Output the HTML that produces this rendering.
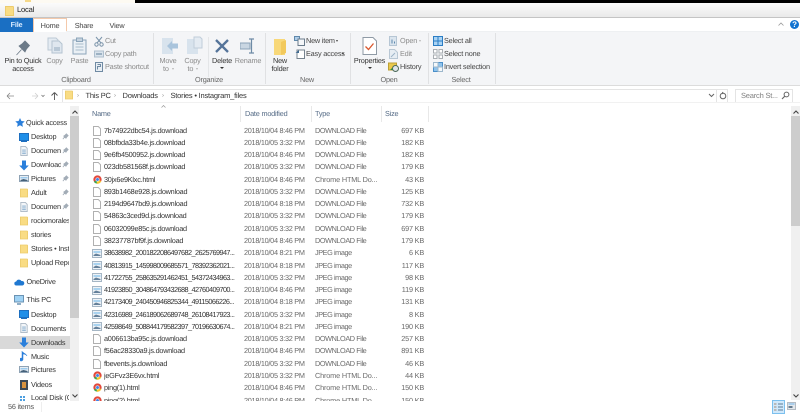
<!DOCTYPE html>
<html><head><meta charset="utf-8"><style>
html,body{margin:0;padding:0;background:#fff}
#p{position:relative;width:800px;height:414px;overflow:hidden;background:#fff;font-family:"Liberation Sans",sans-serif;font-size:7.3px;letter-spacing:-.2px;color:#333;text-rendering:geometricPrecision;filter:blur(.32px)}
#p div,#p svg{position:absolute}
.t{white-space:nowrap;line-height:10px;height:10px}
.c{text-align:center;transform:translateX(-50%)}
.g{color:#8b8b8b}
.l{color:#666}
.sep{width:1px;background:#e0e1e3;top:33px;height:51px}
.row{left:0;width:440px;height:12.27px}
.row div{top:1px}
.n{left:104px;width:134px;overflow:hidden;color:#333;letter-spacing:-.25px}
.n.x{letter-spacing:-.56px}
.d{left:244px;color:#6a6a6a;letter-spacing:-.28px}
.y{left:315px;color:#6a6a6a;letter-spacing:-.42px}
.y.h{letter-spacing:-.16px}
.s{left:390px;width:34px;text-align:right;color:#6a6a6a}
.nv{left:31px;width:38px;overflow:hidden;color:#333}
.pn{width:30px}
.ar{width:0;height:0;border:1.800px solid transparent;border-top:2.200px solid #444;border-bottom:0}
.ar.lg{border-top-color:#b5b5b5}
</style></head><body><div id="p">
<svg width="0" height="0" style="left:0;top:0"><defs>
<symbol id="f" viewBox="0 0 8 10"><path d="M.5.500h4.800l2.200 2.200v6.800H.5z" fill="#fff" stroke="#b0b0b0"/></symbol>
<symbol id="cr" viewBox="0 0 10 10"><circle cx="5" cy="5" r="4.600" fill="#e2483b"/><path d="M5 5L1 7.500A4.600 4.600 0 0 0 5 9.600z" fill="#3aa757"/><path d="M5 5l4.200 1.800A4.600 4.600 0 0 1 4 9.600z" fill="#f7c52b"/><circle cx="5" cy="5" r="2.200" fill="#fff"/><circle cx="5" cy="5" r="1.600" fill="#3f83e6"/></symbol>
<symbol id="j" viewBox="0 0 10 9"><path d="M.5.500h9v8h-9z" fill="#eef2f6" stroke="#a5b6c5"/><path d="M1.500 2h7v2h-7z" fill="#a9d3f0"/><path d="M1.500 6l2.500-1.500 4.500 1.500v1h-7z" fill="#64809a"/></symbol>
<symbol id="fd" viewBox="0 0 10 11"><path d="M.5.500h8.500l.5.500v9.500h-9z" fill="#f9dc84" stroke="#eccb6c"/></symbol>
<symbol id="pin" viewBox="0 0 8 8"><path d="M1 7l2-2.500M2 3.500l2.500 2.500 1-1.500 1.500-1.500-2-2-1.500 1.500z" fill="#a3adb7" stroke="#a3adb7"/></symbol>
<symbol id="dt" viewBox="0 0 10 9"><path d="M.5.500h9v7h-9z" fill="#1f8fe9" stroke="#1d6fc0"/><path d="M2 8.500h6" stroke="#1d6fc0"/></symbol>
<symbol id="doc" viewBox="0 0 8 11"><path d="M.5.500h5l2 2v8h-7z" fill="#f3f6f9" stroke="#aab7c3"/><path d="M2 4.500h4M2 6.500h4M2 8.500h4" stroke="#7ca5c9"/></symbol>
<symbol id="dl" viewBox="0 0 10 11"><path d="M3 .5h4v5h2.800L5 10.500.2 5.500H3z" fill="#2a7fdb"/></symbol>
<symbol id="pc" viewBox="0 0 10 9"><path d="M.5.500h9v6h-9z" fill="#e8eef4" stroke="#8fa3b5"/><path d="M1.500 2h7v1.500h-7z" fill="#9ccbee"/><path d="M1.500 5l3-1 4 1v1h-7z" fill="#45617a"/></symbol>
</defs></svg>

<!-- top strip / title -->
<div style="left:135px;top:0;width:665px;height:3px;background:#000"></div>
<div style="left:0;top:0;width:135px;height:3px;background:#fdfaf2"></div>
<div style="left:25px;top:0;width:6px;height:2px;background:#f6d98a"></div>
<div style="left:0;top:3px;width:800px;height:14px;background:linear-gradient(#fbfbfb,#e9e9e9)"></div>
<div style="left:0;top:17px;width:800px;height:1px;background:#c4c4c4"></div>
<svg style="left:5px;top:6px" width="9" height="10"><use href="#fd" width="9" height="10"/></svg>
<div class="t" style="left:17px;top:5px;font-size:7.600px;color:#222">Local</div>

<!-- tabs -->
<div style="left:0;top:18px;width:33px;height:14px;background:#1a6fc3"></div>
<div class="t c" style="left:16.500px;top:20px;color:#dcecff;font-weight:bold">File</div>
<div style="left:33px;top:18px;width:32px;height:14px;background:#fff;border:1px solid #f4c9ab;border-bottom:0"></div>
<div class="t c" style="left:50px;top:20.500px;color:#444">Home</div>
<div class="t c" style="left:84px;top:20.500px;color:#444">Share</div>
<div class="t c" style="left:117px;top:20.500px;color:#444">View</div>

<!-- ribbon -->
<div style="left:0;top:32px;width:800px;height:53px;background:#f4f5f7"></div>
<div style="left:0;top:85px;width:800px;height:1px;background:#dcdcdc"></div>
<div style="left:66px;top:31px;width:734px;height:1px;background:#eef0f2"></div>
<div class="sep" style="left:153px"></div><div class="sep" style="left:265px"></div><div class="sep" style="left:350px"></div><div class="sep" style="left:428px"></div><div class="sep" style="left:495px"></div>

<!-- clipboard -->
<svg style="left:15px;top:40px" width="16" height="16" viewBox="0 0 16 16"><path d="M1.500 15l5-5.500M4 6l6 6 1.500-3 3-3.500-4.500-4.500-3 3z" fill="#6c7a88" stroke="#6c7a88" stroke-width=".8"/></svg>
<div class="t c" style="left:23px;top:56px;color:#333">Pin to Quick</div>
<div class="t c" style="left:23px;top:64px;color:#333">access</div>
<svg style="left:47px;top:37px" width="16" height="17" viewBox="0 0 16 17"><path d="M1 1h8l2 2v10H1z" fill="#e4ebf2" stroke="#bcc9d5"/><path d="M5 4h7l3 3v9H5z" fill="#dfe7ef" stroke="#b4c3d0"/><path d="M7 10h6v4H7z" fill="#b9c8d6"/></svg>
<div class="t c g" style="left:54.500px;top:56px">Copy</div>
<svg style="left:72px;top:37px" width="15" height="18" viewBox="0 0 15 18"><path d="M1 3h13v14H1z" fill="#eaf0f5" stroke="#8ca5ba"/><path d="M4.500 1h6v3.500h-6z" fill="#c6d3df" stroke="#8ca5ba"/><path d="M3.500 7h8M3.500 10h8M3.500 13h8" stroke="#a8bccc"/></svg>
<div class="t c g" style="left:79.500px;top:56px">Paste</div>
<svg style="left:94px;top:36px" width="10" height="11" viewBox="0 0 10 11"><path d="M2 1l5 6M8 1L3 7" stroke="#7b94aa" fill="none"/><circle cx="2.500" cy="8.500" r="1.700" fill="none" stroke="#7b94aa"/><circle cx="7.500" cy="8.500" r="1.700" fill="none" stroke="#7b94aa"/></svg>
<div class="t g" style="left:105px;top:36px">Cut</div>
<svg style="left:94px;top:50px" width="10" height="8" viewBox="0 0 10 8"><path d="M.5 1h9v6h-9z" fill="#d9e3ec" stroke="#aebfce"/><path d="M2 4h6" stroke="#5f7f9a"/></svg>
<div class="t g" style="left:105px;top:49px">Copy path</div>
<svg style="left:95px;top:62px" width="8" height="10" viewBox="0 0 8 10"><path d="M.5.500h7v9h-7z" fill="#e8eef4" stroke="#6f8aa3"/><path d="M2.500 2.500h3v2h-3v3" fill="none" stroke="#6f8aa3"/></svg>
<div class="t g" style="left:105px;top:62px">Paste shortcut</div>
<div class="t c l" style="left:76px;top:75px">Clipboard</div>

<!-- organize -->
<svg style="left:161px;top:37px" width="17" height="18" viewBox="0 0 17 18"><path d="M1 1h11v16H1z" fill="#d8e3ed"/><path d="M17 6.500H11V4L6 9l5 5v-2.500h6z" fill="#a9c4dc"/></svg>
<div class="t c g" style="left:168px;top:56px">Move</div>
<div class="t g" style="left:163px;top:64px">to</div><div class="ar lg" style="left:171.500px;top:68px"></div>
<svg style="left:186px;top:36px" width="17" height="19" viewBox="0 0 17 19"><path d="M1 3h11v15H1z" fill="#d8e3ed"/><path d="M8 1h6l2 2v9H8z" fill="#e4ebf2" stroke="#c0cdd9"/></svg>
<div class="t c g" style="left:192.500px;top:56px">Copy</div>
<div class="t g" style="left:187.500px;top:64px">to</div><div class="ar lg" style="left:195.500px;top:68px"></div>
<div style="left:208px;top:37px;width:1px;height:40px;background:#e4e6e8"></div>
<svg style="left:214px;top:38px" width="16" height="16" viewBox="0 0 16 16"><path d="M2 2l12 12M14 2L2 14" stroke="#55749a" stroke-width="2.300"/></svg>
<div class="t c" style="left:222px;top:56px;color:#333">Delete</div>
<div style="left:220px;top:67px;width:0;height:0;border:2px solid transparent;border-top:2.500px solid #333;border-bottom:0"></div>
<svg style="left:240px;top:38px" width="16" height="16" viewBox="0 0 16 16"><path d="M0 5h10v6H0z" fill="#c9d6e2" stroke="#8ba3b8"/><path d="M9 1h5M9 15h5M11.500 1v14" stroke="#6e8ba6" stroke-width="1.200"/></svg>
<div class="t c g" style="left:248px;top:56px">Rename</div>
<div class="t c l" style="left:209px;top:75px">Organize</div>

<!-- new -->
<svg style="left:273px;top:38px" width="15" height="17" viewBox="0 0 15 17"><path d="M1 1h11v16H1z" fill="#f8d879"/><path d="M8 4l5-2v13l-5 2z" fill="#f2c95c"/></svg>
<div class="t c" style="left:280px;top:56px;color:#333">New</div>
<div class="t c" style="left:280px;top:64px;color:#333">folder</div>
<svg style="left:294px;top:36px" width="11" height="10" viewBox="0 0 11 10"><path d="M.5.500h5v4h-5z" fill="#aecde8" stroke="#5f88ab"/><path d="M4 3h6.500v6.500H4z" fill="#f5f7f9" stroke="#6a7b8b"/></svg>
<div class="t" style="left:306px;top:36px;color:#444">New item</div><div class="ar" style="left:335.500px;top:40px"></div>
<svg style="left:295px;top:49px" width="10" height="10" viewBox="0 0 10 10"><path d="M2 1h7.500v8.500H2z" fill="#fff" stroke="#76838f"/><path d="M.5 4L4 1v3z" fill="#3f6a90"/></svg>
<div class="t" style="left:306px;top:49px;color:#444">Easy access</div><div class="ar" style="left:341.500px;top:53px"></div>
<div class="t c l" style="left:307px;top:75px">New</div>

<!-- open -->
<svg style="left:362px;top:37px" width="15" height="18" viewBox="0 0 15 18"><path d="M1 .5h10l3.500 3.500v13.500H1z" fill="#fff" stroke="#8f9aa5"/><path d="M3.500 9.500l3 3 5-6" fill="none" stroke="#d9572e" stroke-width="1.300"/></svg>
<div class="t c" style="left:369.500px;top:56px;color:#333">Properties</div>
<div style="left:367.500px;top:67px;width:0;height:0;border:2px solid transparent;border-top:2.500px solid #333;border-bottom:0"></div>
<svg style="left:389px;top:36px" width="9" height="10" viewBox="0 0 9 10"><path d="M.5.500h7v9h-7z" fill="#dbe5ee" stroke="#b6c6d4"/><path d="M3 3.500v4M5.500 5.500v2" stroke="#5e89ad"/></svg>
<div class="t g" style="left:400px;top:36px">Open</div><div class="ar lg" style="left:419px;top:40px"></div>
<svg style="left:389px;top:49px" width="9" height="10" viewBox="0 0 9 10"><path d="M.5.500h5l3 3v6h-8z" fill="#e6edf3" stroke="#b8c7d4"/><path d="M2 8l4-4" stroke="#9db4c8"/></svg>
<div class="t g" style="left:400px;top:49px">Edit</div>
<svg style="left:388px;top:62px" width="11" height="10" viewBox="0 0 11 10"><path d="M.5 1h8v7h-8z" fill="#e9c94c" stroke="#bca037"/><circle cx="7.500" cy="6.500" r="3" fill="#dfe5ea" stroke="#4d6a5a"/><path d="M2 8l2-2 1 2z" fill="#2d8a3e"/></svg>
<div class="t" style="left:400px;top:62px;color:#444">History</div>
<div class="t c l" style="left:389px;top:75px">Open</div>

<!-- select -->
<svg style="left:433px;top:36px" width="10" height="10" viewBox="0 0 10 10"><path d="M.5.500h9v9h-9zM5 .5v9M.5 5h9" fill="#a9d3f4" stroke="#2b7dc4"/></svg>
<div class="t" style="left:444px;top:36px;color:#444">Select all</div>
<svg style="left:433px;top:49px" width="10" height="10" viewBox="0 0 10 10"><path d="M.5.500h3.500v3.500h-3.500zM6 .5h3.500v3.500H6zM.5 6h3.500v3.500h-3.500zM6 6h3.500v3.500H6z" fill="#fff" stroke="#a9aeb3"/></svg>
<div class="t" style="left:444px;top:49px;color:#444">Select none</div>
<svg style="left:433px;top:62px" width="10" height="10" viewBox="0 0 10 10"><path d="M.5 5h4.500v4.500H.5zM5 .5h4.500V5H5z" fill="#8fc3ec" stroke="#4b8fc9"/><path d="M.5.500H5V5H.5zM5 5h4.500v4.500H5z" fill="#f5f8fa" stroke="#9db7cc"/></svg>
<div class="t" style="left:444px;top:62px;color:#444">Invert selection</div>
<div class="t c l" style="left:461px;top:75px">Select</div>

<!-- ribbon right -->
<svg style="left:778px;top:22px" width="6" height="4" viewBox="0 0 6 4"><path d="M.5 3.500L3 1l2.500 2.500" fill="none" stroke="#9a9a9a" stroke-width=".8"/></svg>
<div style="left:790px;top:20px;width:9px;height:9px;border-radius:50%;background:#1273d0;color:#fff;font:bold 8px/9px 'Liberation Sans',sans-serif;text-align:center">?</div>

<!-- address -->
<svg style="left:6px;top:91px" width="60" height="10" viewBox="0 0 60 10"><path d="M1 5h7M1 5l3-3M1 5l3 3" stroke="#888" fill="none" stroke-width=".8"/><path d="M33 5h-6M33 5l-3-3M33 5l-3 3" transform="translate(-1)" stroke="#cfcfcf" fill="none" stroke-width=".8"/><path d="M35.500 4l1.500 1.500L38.500 4" stroke="#777" fill="none" stroke-width=".8"/><path d="M48.500 9V1.500M48.500 1.500l-3 3M48.500 1.500l3 3" stroke="#555" fill="none" stroke-width=".9"/></svg>
<div style="left:62px;top:89px;width:664px;height:12px;border:1px solid #e4e4e4;background:#fff"></div>
<svg style="left:65px;top:90px" width="8" height="10"><use href="#fd" width="8" height="10"/></svg>
<div class="t" style="left:77px;top:91px;color:#888;font-size:6px">›</div>
<div class="t" style="left:85.500px;top:91px;color:#333;font-size:7.500px">This PC</div>
<div class="t" style="left:114px;top:91px;color:#888;font-size:6px">›</div>
<div class="t" style="left:122.500px;top:91px;color:#333;font-size:7.500px">Downloads</div>
<div class="t" style="left:162px;top:91px;color:#888;font-size:6px">›</div>
<div class="t" style="left:170.500px;top:91px;color:#333;font-size:7.500px">Stories • Instagram_files</div>
<svg style="left:708px;top:93px" width="7" height="5" viewBox="0 0 7 5"><path d="M1 1l2.500 2.500L6 1" fill="none" stroke="#666"/></svg>
<div style="left:716px;top:89px;width:1px;height:13px;background:#e4e4e4"></div>
<svg style="left:719px;top:91px" width="8" height="9" viewBox="0 0 8 9"><circle cx="4" cy="5" r="2.800" fill="none" stroke="#666"/><path d="M3 .8l2 1.200-2 1.200z" fill="#666"/></svg>
<div style="left:735px;top:89px;width:56px;height:12px;border:1px solid #e4e4e4;background:#fff"></div>
<div class="t g" style="left:741px;top:91px;color:#808080;font-size:7.500px">Search St...</div>
<svg style="left:781px;top:91px" width="9" height="9" viewBox="0 0 9 9"><circle cx="5.500" cy="3.500" r="2.400" fill="none" stroke="#666"/><path d="M3.800 5.200L1 8" stroke="#666" stroke-width="1.100"/></svg>
<div style="left:0;top:102px;width:800px;height:1px;background:#f1f1f1"></div>

<!-- nav scrollbar -->
<div style="left:70px;top:106px;width:9px;height:295px;background:#f0f0f0"></div>
<div style="left:70px;top:116px;width:9px;height:202px;background:#cdcdcd"></div>
<svg style="left:72px;top:110px" width="6" height="4" viewBox="0 0 6 4"><path d="M.5 3.500L3 1l2.500 2.500" fill="none" stroke="#444" stroke-width="1.100"/></svg>
<svg style="left:72px;top:394px" width="6" height="4" viewBox="0 0 6 4"><path d="M.5.500L3 3l2.500-2.500" fill="none" stroke="#444" stroke-width="1.100"/></svg>

<!-- nav -->
<div style="left:0;top:336px;width:70px;height:13px;background:#d9d9d9"></div>
<svg style="left:15px;top:118px" width="10" height="9" viewBox="0 0 10 9"><path d="M5 0l1.400 3 3.300.4-2.400 2.200.6 3.300L5 7.300 2.100 8.900l.6-3.300L.3 3.400 3.600 3z" fill="#2a7fdb"/></svg>
<div class="t" style="left:26px;top:117.500px;color:#333">Quick access</div>
<svg style="left:19px;top:133px" width="10" height="9"><use href="#dt" width="10" height="9"/></svg><div class="t nv pn" style="top:132px">Desktop</div><svg style="left:62px;top:133px" width="7" height="7"><use href="#pin" width="7" height="7"/></svg>
<svg style="left:20px;top:146px" width="8" height="10"><use href="#doc" width="8" height="10"/></svg><div class="t nv pn" style="top:146px">Documents</div><svg style="left:62px;top:147px" width="7" height="7"><use href="#pin" width="7" height="7"/></svg>
<svg style="left:19px;top:160px" width="10" height="11"><use href="#dl" width="10" height="11"/></svg><div class="t nv pn" style="top:160px">Downloads</div><svg style="left:62px;top:161px" width="7" height="7"><use href="#pin" width="7" height="7"/></svg>
<svg style="left:19px;top:175px" width="10" height="9"><use href="#pc" width="10" height="9"/></svg><div class="t nv pn" style="top:174px">Pictures</div><svg style="left:62px;top:175px" width="7" height="7"><use href="#pin" width="7" height="7"/></svg>
<svg style="left:20px;top:188px" width="8" height="10"><use href="#fd" width="8" height="10"/></svg><div class="t nv pn" style="top:188px">Adult</div><svg style="left:62px;top:189px" width="7" height="7"><use href="#pin" width="7" height="7"/></svg>
<svg style="left:20px;top:202px" width="8" height="10"><use href="#doc" width="8" height="10"/></svg><div class="t nv pn" style="top:202px">Documents</div><svg style="left:62px;top:203px" width="7" height="7"><use href="#pin" width="7" height="7"/></svg>
<svg style="left:20px;top:216px" width="8" height="10"><use href="#fd" width="8" height="10"/></svg><div class="t nv" style="top:216px">rociomorales</div>
<svg style="left:20px;top:230px" width="8" height="10"><use href="#fd" width="8" height="10"/></svg><div class="t nv" style="top:230px">stories</div>
<svg style="left:20px;top:244px" width="8" height="10"><use href="#fd" width="8" height="10"/></svg><div class="t nv" style="top:244px">Stories • Instagram</div>
<svg style="left:20px;top:258px" width="8" height="10"><use href="#fd" width="8" height="10"/></svg><div class="t nv" style="top:258px">Upload Reports</div>
<svg style="left:14px;top:279px" width="11" height="7" viewBox="0 0 11 7"><path d="M2.500 6.500a2 2 0 0 1-.3-4A3 3 0 0 1 7.500 2a2.300 2.300 0 0 1 1 4.500z" fill="#1f78d1"/></svg><div class="t" style="left:26.500px;top:277px;color:#333">OneDrive</div>
<svg style="left:14px;top:295px" width="10" height="10" viewBox="0 0 10 10"><path d="M.5.500h9v6.500h-9z" fill="#9fd2f4" stroke="#6b93b3"/><path d="M3 9h4" stroke="#6b93b3" stroke-width="1.500"/></svg><div class="t" style="left:26.500px;top:295px;color:#333">This PC</div>
<svg style="left:19px;top:310px" width="10" height="9"><use href="#dt" width="10" height="9"/></svg><div class="t nv" style="top:309.500px">Desktop</div>
<svg style="left:20px;top:323px" width="8" height="10"><use href="#doc" width="8" height="10"/></svg><div class="t nv" style="top:323.500px">Documents</div>
<svg style="left:19px;top:337px" width="10" height="11"><use href="#dl" width="10" height="11"/></svg><div class="t nv" style="top:337.500px">Downloads</div>
<svg style="left:20px;top:351px" width="8" height="11" viewBox="0 0 8 11"><path d="M3 1v7.500a1.800 1.500 0 1 1-1-1.300V0c0 2 4 2 5 5-1-1.500-2.500-2-4-2z" fill="#2a7fdb" stroke="#2a7fdb" stroke-width=".5"/></svg><div class="t nv" style="top:351.500px">Music</div>
<svg style="left:19px;top:366px" width="10" height="9"><use href="#pc" width="10" height="9"/></svg><div class="t nv" style="top:365px">Pictures</div>
<svg style="left:20px;top:380px" width="8" height="10" viewBox="0 0 8 10"><path d="M0 0h8v10H0z" fill="#3f4a55"/><path d="M2 2h4v6H2z" fill="#d9933f"/></svg><div class="t nv" style="top:379.500px">Videos</div>
<div style="left:0;top:393px;width:70px;height:8px;overflow:hidden"><svg style="left:18px;top:1px" width="11" height="8" viewBox="0 0 11 8"><path d="M2 2h2v2H2zM5 2h2v2H5zM2 5h2v2H2zM5 5h2v2H5z" fill="#4d9fe0"/></svg><div class="t nv" style="top:0">Local Disk (C:)</div></div>

<!-- headers -->
<svg style="left:161px;top:105px" width="5" height="3" viewBox="0 0 5 3"><path d="M.5 2.500L2.500.5l2 2" fill="none" stroke="#999" stroke-width=".7"/></svg>
<div class="t" style="left:92px;top:109px;color:#546a85">Name</div>
<div class="t" style="left:245px;top:109px;color:#546a85">Date modified</div>
<div class="t" style="left:315px;top:109px;color:#546a85">Type</div>
<div class="t" style="left:385px;top:109px;color:#546a85">Size</div>
<div style="left:240px;top:106px;width:1px;height:16px;background:#e8e8e8"></div>
<div style="left:311px;top:106px;width:1px;height:16px;background:#e8e8e8"></div>
<div style="left:381px;top:106px;width:1px;height:16px;background:#e8e8e8"></div>
<div style="left:428px;top:106px;width:1px;height:16px;background:#e8e8e8"></div>

<!-- file list -->
<div style="left:0;top:124.600px;width:440px;height:276px;overflow:hidden">
<div class="row" style="top:0"><svg style="left:93px;top:1px" width="8" height="10"><use href="#f" width="8" height="10"/></svg><div class="t n">7b74922dbc54.js.download</div><div class="t d">2018/10/04 8:46 PM</div><div class="t y">DOWNLOAD File</div><div class="t s">697 KB</div></div>
<div class="row" style="top:12.270px"><svg style="left:93px;top:1px" width="8" height="10"><use href="#f" width="8" height="10"/></svg><div class="t n">08bfbda33b4e.js.download</div><div class="t d">2018/10/05 3:32 PM</div><div class="t y">DOWNLOAD File</div><div class="t s">182 KB</div></div>
<div class="row" style="top:24.540px"><svg style="left:93px;top:1px" width="8" height="10"><use href="#f" width="8" height="10"/></svg><div class="t n">9e6fb4500952.js.download</div><div class="t d">2018/10/04 8:46 PM</div><div class="t y">DOWNLOAD File</div><div class="t s">182 KB</div></div>
<div class="row" style="top:36.810px"><svg style="left:93px;top:1px" width="8" height="10"><use href="#f" width="8" height="10"/></svg><div class="t n">023db581568f.js.download</div><div class="t d">2018/10/05 3:32 PM</div><div class="t y">DOWNLOAD File</div><div class="t s">179 KB</div></div>
<div class="row" style="top:49.080px"><svg style="left:92.500px;top:1px" width="9" height="9"><use href="#cr" width="9" height="9"/></svg><div class="t n">30jx6e9Klxc.html</div><div class="t d">2018/10/04 8:46 PM</div><div class="t y h">Chrome HTML Do...</div><div class="t s">43 KB</div></div>
<div class="row" style="top:61.350px"><svg style="left:93px;top:1px" width="8" height="10"><use href="#f" width="8" height="10"/></svg><div class="t n">893b1468e928.js.download</div><div class="t d">2018/10/05 3:32 PM</div><div class="t y">DOWNLOAD File</div><div class="t s">125 KB</div></div>
<div class="row" style="top:73.620px"><svg style="left:93px;top:1px" width="8" height="10"><use href="#f" width="8" height="10"/></svg><div class="t n">2194d9647bd9.js.download</div><div class="t d">2018/10/04 8:18 PM</div><div class="t y">DOWNLOAD File</div><div class="t s">732 KB</div></div>
<div class="row" style="top:85.890px"><svg style="left:93px;top:1px" width="8" height="10"><use href="#f" width="8" height="10"/></svg><div class="t n">54863c3ced9d.js.download</div><div class="t d">2018/10/05 3:32 PM</div><div class="t y">DOWNLOAD File</div><div class="t s">179 KB</div></div>
<div class="row" style="top:98.160px"><svg style="left:93px;top:1px" width="8" height="10"><use href="#f" width="8" height="10"/></svg><div class="t n">06032099e85c.js.download</div><div class="t d">2018/10/05 3:32 PM</div><div class="t y">DOWNLOAD File</div><div class="t s">697 KB</div></div>
<div class="row" style="top:110.430px"><svg style="left:93px;top:1px" width="8" height="10"><use href="#f" width="8" height="10"/></svg><div class="t n">38237787bf9f.js.download</div><div class="t d">2018/10/04 8:46 PM</div><div class="t y">DOWNLOAD File</div><div class="t s">179 KB</div></div>
<div class="row" style="top:122.700px"><svg style="left:92px;top:1.500px" width="10" height="9"><use href="#j" width="10" height="9"/></svg><div class="t n x">38638982_2001822086497682_2625769947...</div><div class="t d">2018/10/04 8:21 PM</div><div class="t y">JPEG image</div><div class="t s">6 KB</div></div>
<div class="row" style="top:134.970px"><svg style="left:92px;top:1.500px" width="10" height="9"><use href="#j" width="10" height="9"/></svg><div class="t n x">40813915_145998009685571_78392362021...</div><div class="t d">2018/10/04 8:18 PM</div><div class="t y">JPEG image</div><div class="t s">117 KB</div></div>
<div class="row" style="top:147.240px"><svg style="left:92px;top:1.500px" width="10" height="9"><use href="#j" width="10" height="9"/></svg><div class="t n x">41722755_258635291462451_54372434963...</div><div class="t d">2018/10/05 3:32 PM</div><div class="t y">JPEG image</div><div class="t s">98 KB</div></div>
<div class="row" style="top:159.510px"><svg style="left:92px;top:1.500px" width="10" height="9"><use href="#j" width="10" height="9"/></svg><div class="t n x">41923850_304864793432688_42760409700...</div><div class="t d">2018/10/04 8:46 PM</div><div class="t y">JPEG image</div><div class="t s">119 KB</div></div>
<div class="row" style="top:171.780px"><svg style="left:92px;top:1.500px" width="10" height="9"><use href="#j" width="10" height="9"/></svg><div class="t n x">42173409_240450946825344_49115066226...</div><div class="t d">2018/10/04 8:18 PM</div><div class="t y">JPEG image</div><div class="t s">131 KB</div></div>
<div class="row" style="top:184.050px"><svg style="left:92px;top:1.500px" width="10" height="9"><use href="#j" width="10" height="9"/></svg><div class="t n x">42316989_246189062689748_26108417923...</div><div class="t d">2018/10/05 3:32 PM</div><div class="t y">JPEG image</div><div class="t s">8 KB</div></div>
<div class="row" style="top:196.320px"><svg style="left:92px;top:1.500px" width="10" height="9"><use href="#j" width="10" height="9"/></svg><div class="t n x">42598649_508844179582397_70196630674...</div><div class="t d">2018/10/04 8:21 PM</div><div class="t y">JPEG image</div><div class="t s">190 KB</div></div>
<div class="row" style="top:208.590px"><svg style="left:93px;top:1px" width="8" height="10"><use href="#f" width="8" height="10"/></svg><div class="t n">a006613ba95c.js.download</div><div class="t d">2018/10/05 3:32 PM</div><div class="t y">DOWNLOAD File</div><div class="t s">257 KB</div></div>
<div class="row" style="top:220.860px"><svg style="left:93px;top:1px" width="8" height="10"><use href="#f" width="8" height="10"/></svg><div class="t n">f56ac28330a9.js.download</div><div class="t d">2018/10/04 8:46 PM</div><div class="t y">DOWNLOAD File</div><div class="t s">891 KB</div></div>
<div class="row" style="top:233.130px"><svg style="left:93px;top:1px" width="8" height="10"><use href="#f" width="8" height="10"/></svg><div class="t n">fbevents.js.download</div><div class="t d">2018/10/05 3:32 PM</div><div class="t y">DOWNLOAD File</div><div class="t s">46 KB</div></div>
<div class="row" style="top:245.400px"><svg style="left:92.500px;top:1px" width="9" height="9"><use href="#cr" width="9" height="9"/></svg><div class="t n">jeGFvz3E6vx.html</div><div class="t d">2018/10/05 3:32 PM</div><div class="t y h">Chrome HTML Do...</div><div class="t s">44 KB</div></div>
<div class="row" style="top:257.670px"><svg style="left:92.500px;top:1px" width="9" height="9"><use href="#cr" width="9" height="9"/></svg><div class="t n">ping(1).html</div><div class="t d">2018/10/04 8:46 PM</div><div class="t y h">Chrome HTML Do...</div><div class="t s">150 KB</div></div>
<div class="row" style="top:269.940px"><svg style="left:92.500px;top:1px" width="9" height="9"><use href="#cr" width="9" height="9"/></svg><div class="t n">ping(2).html</div><div class="t d">2018/10/04 8:46 PM</div><div class="t y h">Chrome HTML Do...</div><div class="t s">150 KB</div></div>
</div>

<!-- right scrollbar -->
<div style="left:791px;top:106px;width:9px;height:294px;background:#f0f0f0"></div>
<div style="left:791px;top:116px;width:9px;height:110px;background:#cdcdcd"></div>
<svg style="left:792.500px;top:110px" width="6" height="4" viewBox="0 0 6 4"><path d="M.5 3.500L3 1l2.500 2.500" fill="none" stroke="#444" stroke-width="1.100"/></svg>
<svg style="left:792.500px;top:394px" width="6" height="4" viewBox="0 0 6 4"><path d="M.5.500L3 3l2.500-2.500" fill="none" stroke="#444" stroke-width="1.100"/></svg>

<!-- status -->
<div class="t" style="left:8px;top:402px;color:#555">56 items</div>
<div style="left:41px;top:402px;width:1px;height:10px;background:#eee"></div>
<div style="left:772px;top:400px;width:11px;height:12px;background:#cfe8fb;border:1px solid #7cc0ee"></div>
<svg style="left:774px;top:402px" width="9" height="9" viewBox="0 0 9 9"><path d="M0 1h2.500v2H0zM0 4h2.500v2H0zM0 7h2.500v2H0z" fill="#b9b9b9"/><path d="M4 2h5M4 5h5M4 8h5" stroke="#5e7c96"/></svg>
<svg style="left:787px;top:402px" width="9" height="8" viewBox="0 0 9 8"><path d="M.5.500h8v7h-8z" fill="#e4e8ec" stroke="#b5bcc3"/><path d="M1.500 2h6" stroke="#6fb5ea"/><path d="M1.500 5h4" stroke="#3d5870" stroke-width="1.500"/></svg>
</div></body></html>
